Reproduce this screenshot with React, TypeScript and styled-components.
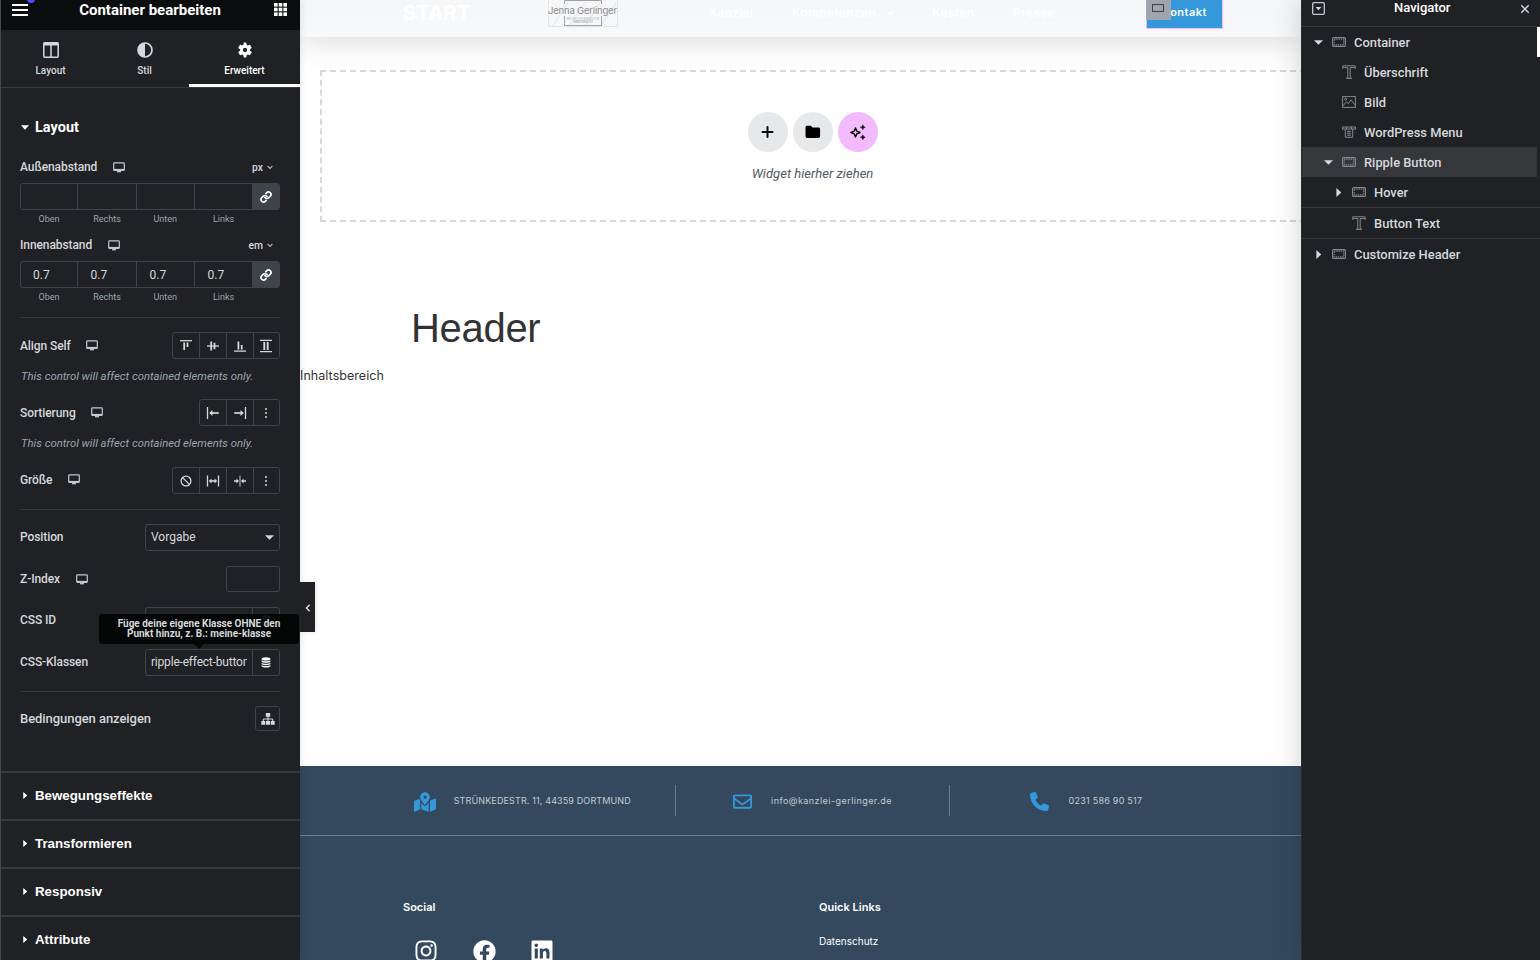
import React from 'react';
import styled, { createGlobalStyle } from 'styled-components';
import { FaInstagram, FaFacebook, FaLinkedin, FaRegEnvelope, FaMapMarkedAlt } from 'react-icons/fa';
import { FaPhone } from 'react-icons/fa6';

const Global = createGlobalStyle`
  * { box-sizing: border-box; }
  html, body { margin: 0; padding: 0; overflow: hidden; background: #fff; }
  body { font-family: Roboto, sans-serif; }
  svg { display: block; flex: none; }
`;

const Shell = styled.div`
  position: relative;
  display: grid;
  grid-template-columns: 300px 1001px 239px;
  width: 1540px;
  height: 960px;
  overflow: hidden;
`;

/* ---------- editor panel ---------- */
const Panel = styled.aside`
  position: relative;
  z-index: 3;
  height: 960px;
  background: #1f2124;
  border-left: 1px solid #45474b;
  color: #d5d8dc;
  box-shadow: 0 0 8px rgba(0, 0, 0, 0.12);
`;
const PanelHeader = styled.header`
  position: relative;
  display: flex;
  align-items: flex-start;
  justify-content: space-between;
  height: 30px;
  padding: 3px 13px 0 11px;
  background: #0c0d0e;
`;
const PanelTitle = styled.h1`
  margin: -3px 0 0 -2px;
  font-size: 15px;
  line-height: 20px;
  font-weight: 700;
  color: #fff;
`;
const Notice = styled.i`
  position: absolute;
  left: 26px;
  top: -5px;
  width: 8px;
  height: 8px;
  border-radius: 50%;
  background: #524cff;
`;
const Tabs = styled.nav`
  display: grid;
  grid-template-columns: 99px 89px 111px;
  height: 58px;
  border-bottom: 1px solid #36383c;
`;
const Tab = styled.div<{ $active?: boolean }>`
  display: flex;
  flex-direction: column;
  align-items: center;
  height: 57px;
  padding-top: 12px;
  gap: 6px;
  font-size: 10px;
  line-height: 13px;
  font-weight: 500;
  color: ${p => (p.$active ? '#fff' : '#d5d8dc')};
  border-bottom: ${p => (p.$active ? '3px solid #fff' : 'none')};
`;
const SectionTitle = styled.div`
  display: flex;
  align-items: center;
  height: 20px;
  margin-top: 29px;
  padding-left: 20px;
  gap: 6px;
  font-size: 14.5px;
  font-weight: 700;
  color: #fff;
`;
const Body = styled.div`
  padding: 0 20px 0 19px;
`;
const Row = styled.div<{ $h: number; $mt?: number }>`
  display: flex;
  align-items: center;
  justify-content: space-between;
  height: ${p => p.$h}px;
  margin-top: ${p => p.$mt || 0}px;
`;
const Label = styled.div<{ $up?: boolean; $large?: boolean }>`
  display: flex;
  align-items: center;
  gap: 15.5px;
  padding-bottom: ${p => (p.$up ? 2 : 0)}px;
  font-size: ${p => (p.$large ? 13 : 12)}px;
  line-height: 16px;
  font-weight: 500;
  letter-spacing: ${p => (p.$large ? -0.06 : -0.09)}px;
  white-space: nowrap;
`;
const Unit = styled.div`
  display: flex;
  align-items: center;
  gap: 3.5px;
  padding-right: 7.5px;
  font-size: 10.3px;
  font-weight: 500;
`;
const SidesBlock = styled.div`
  height: 42px;
  margin-top: 8px;
`;
const Sides = styled.div`
  display: grid;
  grid-template-columns: 57px 59px 58px 58px 26px;
  height: 27px;
  border: 1px solid #3f444b;
  border-radius: 3px;
  overflow: hidden;
  width: 260px;
`;
const Side = styled.div`
  display: flex;
  align-items: center;
  padding-left: 12.5px;
  font-size: 12px;
  letter-spacing: 0.1px;
  border-right: 1px solid #3f444b;
  &:first-child { padding-left: 12px; }
`;
const LinkCell = styled.div`
  display: flex;
  align-items: center;
  padding-left: 7px;
  background: #3f444b;
  color: #fff;
`;
const SideLabels = styled.div`
  display: grid;
  grid-template-columns: 58px 58px 58.5px 58px;
  margin-top: 3px;
  height: 12px;
  font-size: 9px;
  line-height: 12px;
  text-align: center;
  color: #9da5ae;
`;
const Divider = styled.hr<{ $mt: number }>`
  height: 1px;
  margin: ${p => p.$mt}px 0 0;
  border: 0;
  background: #36383c;
`;
const Group = styled.div`
  display: flex;
  height: 27px;
  border: 1px solid #3f444b;
  border-radius: 3px;
`;
const Choice = styled.span`
  display: flex;
  align-items: center;
  justify-content: center;
  width: 27px;
  & + & { border-left: 1px solid #3f444b; }
  &:last-child { width: 26px; padding-right: 1px; }
  &:first-child { width: 26px; }
`;
const Hint = styled.p`
  height: 14px;
  margin: 10px 0 0 1px;
  padding-top: 1px;
  font-size: 11.3px;
  line-height: 14px;
  font-style: italic;
  white-space: nowrap;
  color: #9da5ae;
`;
const Field = styled.div<{ $w: number; $h?: number }>`
  display: flex;
  align-items: center;
  justify-content: space-between;
  width: ${p => p.$w}px;
  height: ${p => p.$h || 27}px;
  border: 1px solid #3f444b;
  border-radius: 3px;
  font-size: 12px;
  color: #d5d8dc;
`;
const FieldText = styled.span<{ $ls?: number }>`
  flex: 1;
  margin: 0 5px;
  padding-bottom: 2px;
  overflow: hidden;
  white-space: nowrap;
  letter-spacing: ${p => p.$ls || 0}px;
`;
const FieldAddon = styled.span`
  display: flex;
  align-items: center;
  justify-content: center;
  width: 27px;
  height: 25px;
  border-left: 1px solid #3f444b;
  color: #fff;
`;
const SelectArrow = styled.span`
  width: 14.5px;
  padding-bottom: 1px;
`;
const IconButton = styled.div`
  display: flex;
  align-items: center;
  justify-content: center;
  width: 25px;
  height: 25px;
  border: 1px solid #3f444b;
  border-radius: 3px;
`;
const Tooltip = styled.div`
  position: absolute;
  left: 98px;
  top: 614px;
  width: 200px;
  height: 30px;
  padding: 5px 0 0;
  border-radius: 3px;
  background: rgba(3, 4, 4, 0.93);
  color: #d5d8dc;
  font-size: 10px;
  line-height: 10px;
  font-weight: 700;
  text-align: center;
  white-space: nowrap;
  &::after {
    content: '';
    position: absolute;
    left: 95px;
    top: 30px;
    border: 5px solid transparent;
    border-top-color: #060707;
    border-bottom: 0;
  }
`;
const Collapse = styled.div`
  position: absolute;
  left: 299px;
  top: 582px;
  display: flex;
  align-items: center;
  justify-content: center;
  width: 15px;
  height: 50px;
  padding-top: 1px;
  background: #1f2124;
  box-shadow: 2px 0 5px rgba(0, 0, 0, 0.08);
`;
const Accordion = styled.div`
  margin-top: 40px;
`;
const AccordionItem = styled.div`
  display: flex;
  align-items: center;
  gap: 8px;
  height: 48px;
  padding: 0 0 2px 21.6px;
  border-top: 2px solid #36383c;
  font-family: 'Liberation Sans', sans-serif;
  font-size: 13.3px;
  font-weight: 700;
  color: #fff;
`;

/* ---------- page preview ---------- */
const Preview = styled.main`
  position: relative;
  display: flex;
  flex-direction: column;
  height: 960px;
  overflow: hidden;
  background: #fff;
  font-family: Inter, sans-serif;
`;
const SiteHeader = styled.header`
  position: relative;
  flex: none;
  height: 37px;
  background: linear-gradient(#f5f6f8, #f8f9fb);
  box-shadow: 0 4px 30px rgba(0, 0, 0, 0.15);
`;
const HeaderRow = styled.div`
  display: flex;
  align-items: flex-start;
  height: 37px;
  padding-left: 103px;
  color: #fff;
`;
const Brand = styled.div`
  width: 145px;
  font-size: 20px;
  line-height: 26px;
  font-weight: 700;
  letter-spacing: 0.25px;
`;
const Logo = styled.div`
  width: 161px;
`;
const NavItem = styled.span<{ $w: number; $ls?: number }>`
  display: flex;
  align-items: center;
  gap: 10px;
  width: ${p => p.$w}px;
  font-size: 12px;
  line-height: 25px;
  font-weight: 500;
  letter-spacing: ${p => p.$ls ?? 0.45}px;
  white-space: nowrap;
`;
const Cta = styled.div`
  position: relative;
  width: 77px;
  height: 29px;
  padding-right: 15px;
  border: 1px solid #f3bafd;
  border-top: 0;
  background: #3498db;
  font-size: 11px;
  line-height: 25px;
  font-weight: 600;
  letter-spacing: 0.5px;
  text-align: right;
`;
const Handle = styled.div`
  position: absolute;
  left: -1px;
  top: 0;
  display: flex;
  justify-content: center;
  width: 25px;
  height: 20px;
  padding: 4px 1px 0 0;
  background: #9da5ae;
`;
const DropZone = styled.section`
  display: flex;
  flex-direction: column;
  align-items: center;
  flex: none;
  width: 986px;
  height: 152px;
  margin: 33px 0 0 20px;
  padding-top: 40px;
  border: 2px dashed #d5d8dc;
  font-family: Roboto, sans-serif;
`;
const Circles = styled.div`
  display: flex;
  gap: 5px;
`;
const Circle = styled.span<{ $ai?: boolean }>`
  display: flex;
  align-items: center;
  justify-content: center;
  width: 40px;
  height: 40px;
  border-radius: 50%;
  background: ${p => (p.$ai ? '#f3bafd' : '#e6e8ea')};
`;
const DropText = styled.p`
  margin: 13px 0 0 -1px;
  font-size: 13px;
  line-height: 17px;
  font-style: italic;
  letter-spacing: 0.03px;
  color: #515962;
`;
const Headline = styled.h2`
  margin: 81px 0 0 111px;
  font-family: 'Liberation Sans', sans-serif;
  font-size: 40px;
  line-height: 50px;
  font-weight: 400;
  letter-spacing: -0.3px;
  color: #333;
`;
const Copy = styled.p`
  margin: 14px 0 0;
  font-size: 12.5px;
  line-height: 18px;
  letter-spacing: 0.05px;
  color: #333;
`;
const Footer = styled.footer`
  height: 194px;
  margin-top: auto;
  background: #34495e;
  color: #fff;
`;
const ContactBar = styled.div`
  display: grid;
  grid-template-columns: 376px 274px 351px;
  height: 70px;
  padding-top: 19px;
  border-bottom: 1px solid #6b7d8b;
`;
const Contact = styled.div<{ $pl: number; $gap: number; $line?: boolean; $ls: number }>`
  display: flex;
  align-items: center;
  gap: ${p => p.$gap}px;
  height: 31px;
  padding-left: ${p => p.$pl}px;
  border-right: ${p => (p.$line ? '1px solid #6b7d8b' : 'none')};
  font-size: 9px;
  letter-spacing: ${p => p.$ls}px;
  color: #c3cad1;
  white-space: nowrap;
  svg { margin-top: 2px; color: #3498db; }
`;
const FooterColumns = styled.div`
  display: grid;
  grid-template-columns: 416px auto;
  padding: 63px 0 0 103px;
`;
const FooterTitle = styled.h3`
  margin: 0;
  font-size: 11px;
  line-height: 16px;
  font-weight: 600;
`;
const Socials = styled.div`
  display: flex;
  align-items: center;
  height: 24px;
  gap: 34.5px;
  margin: 24px 0 0 11px;
`;
const FooterLink = styled.div`
  margin-top: 19px;
  font-size: 10px;
  line-height: 14px;
`;

/* ---------- navigator ---------- */
const Navigator = styled.aside`
  position: relative;
  z-index: 2;
  height: 960px;
  background: #1f2124;
  border-left: 1px solid #2a2c30;
  color: #d5d8dc;
  box-shadow: 0 0 30px rgba(0, 0, 0, 0.18);
`;
const NavHead = styled.header`
  display: flex;
  justify-content: space-between;
  height: 27px;
  padding: 2px 10.5px 0 10px;
  border-bottom: 1px solid #36383c;
  font-size: 13px;
  line-height: 11px;
  font-weight: 500;
  color: #fff;
`;
const TreeRow = styled.div<{ $level: number; $active?: boolean; $line?: boolean }>`
  display: flex;
  align-items: center;
  height: ${p => (p.$line ? 31 : 30)}px;
  margin-right: ${p => (p.$active ? 3 : 0)}px;
  padding-left: ${p => 12 + p.$level * 10}px;
  background: ${p => (p.$active ? '#35373b' : 'transparent')};
  border-bottom: ${p => (p.$line ? '1px solid #36383c' : 'none')};
  font-size: 12.88px;
  font-weight: 500;
  white-space: nowrap;
`;
const Arrow = styled.span`
  display: flex;
  justify-content: center;
  width: 18px;
  padding-right: 9px;
`;
const TreeIcon = styled.span`
  width: 22px;
  color: #85888c;
`;
const Scroll = styled.i`
  position: absolute;
  right: 0;
  top: 27px;
  width: 3px;
  height: 30px;
  background: #fff;
`;

/* ---------- icons ---------- */
const Desktop = () => (
  <svg width="12" height="11" viewBox="0 0 12 11" fill="none" stroke="#c4c8cd" strokeWidth="1.2">
    <rect x="0.7" y="0.9" width="10.6" height="7.4" rx="0.8" />
    <path d="M0.7 7.7h10.6" strokeWidth="1.6" />
    <path d="M4 9.7h4" strokeWidth="1.3" />
  </svg>
);
const CaretDown = ({ w = 8, h = 5 }: { w?: number; h?: number }) => (
  <svg width={w} height={h} viewBox="0 0 8 5" preserveAspectRatio="none"><path d="M0 .2h8L4 4.800z" fill="currentColor" /></svg>
);
const CaretRight = ({ h = 8 }: { h?: number }) => (
  <svg width={h * 0.63} height={h} viewBox="0 0 5 8"><path d="M.3 0v8L4.800 4z" fill="currentColor" /></svg>
);
const SmallChevron = () => (
  <svg width="6" height="5" viewBox="0 0 6 5" fill="none" stroke="#b4b9bf" strokeWidth="1.1"><path d="M.6 1l2.4 2.4L5.4 1" /></svg>
);
const Chain = () => (
  <svg width="12" height="12" viewBox="0 0 24 24" fill="none" stroke="currentColor" strokeWidth="3.4" strokeLinecap="round" strokeLinejoin="round">
    <path d="M10 13a5 5 0 0 0 7.54.54l3-3a5 5 0 0 0-7.07-7.07l-1.72 1.71" />
    <path d="M14 11a5 5 0 0 0-7.54-.54l-3 3a5 5 0 0 0 7.07 7.07l1.71-1.71" />
  </svg>
);
const Stack = () => (
  <svg width="10" height="11" viewBox="0 0 10 11" fill="currentColor">
    <ellipse cx="5" cy="1.9" rx="4.4" ry="1.7" />
    <path d="M.6 3.2c1 1.3 7.8 1.3 8.8 0v1.5c-1 1.5-7.8 1.5-8.8 0zM.6 5.7c1 1.3 7.8 1.3 8.8 0V7c-1 1.5-7.8 1.5-8.8 0zM.6 8c1 1.3 7.8 1.3 8.8 0v1.3c-1 1.7-7.8 1.7-8.8 0z" />
  </svg>
);
const paths: Record<string, React.ReactNode> = {
  top: <><path d="M1 1.7h12" /><path d="M5.2 3.5V11" strokeWidth="1.8" /><path d="M8.500 3.500V8" strokeWidth="1.8" /></>,
  middle: <><path d="M1 7h12" /><path d="M5.2 2.500v9" strokeWidth="1.8" /><path d="M8.500 3.800v6.400" strokeWidth="1.8" /></>,
  bottom: <><path d="M1 12.1h12" /><path d="M5.4 2.500v8" strokeWidth="1.8" /><path d="M8.700 6v4.500" strokeWidth="1.8" /></>,
  stretch: <><path d="M1 1.3h12M1 12.700h12" /><path d="M5.3 3v8M8.700 3v8" strokeWidth="1.9" /></>,
  start: <><path d="M1.5 1v12" /><path d="M12.8 7H4.500" strokeWidth="1.7" /><path d="M3.2 7l3.300-2.900v5.800z" fill="currentColor" stroke="none" /></>,
  end: <><path d="M12.5 1v12" /><path d="M1.2 7h8.300" strokeWidth="1.7" /><path d="M10.8 7L7.500 4.100v5.800z" fill="currentColor" stroke="none" /></>,
  dots: <g fill="currentColor" stroke="none"><circle cx="7" cy="3" r="1" /><circle cx="7" cy="7" r="1" /><circle cx="7" cy="11" r="1" /></g>,
  none: <><circle cx="7" cy="7" r="4.9" /><path d="M3.6 3.600l6.800 6.800" /></>,
  grow: <><path d="M1.5 1.500v11M12.500 1.500v11" /><path d="M4 7h6" strokeWidth="1.6" /><path d="M2.8 7l2.700-2.600v5.200zM11.200 7L8.500 4.400v5.200z" fill="currentColor" stroke="none" /></>,
  shrink: <><path d="M7 1.500v11" opacity=".7" /><path d="M1 7h3M13 7h-3" strokeWidth="1.6" /><path d="M6 7L3.400 4.600v4.800zM8 7l2.600-2.400v4.800z" fill="currentColor" stroke="none" /></>,
};
const Glyph = ({ name }: { name: string }) => (
  <svg width="14" height="14" viewBox="0 0 14 14" fill="none" stroke="currentColor" strokeWidth="1.3">{paths[name]}</svg>
);
const tree: Record<string, React.ReactNode> = {
  box: <><rect x=".6" y="2.600" width="12.800" height="8.800" rx="1" strokeWidth="1.1" /><rect x="2.200" y="4.200" width="9.600" height="5.600" strokeDasharray="1.3 .9" strokeWidth="1.2" /></>,
  text: <path d="M.8 3.800V.8h12.400v3M.8 2.600h5v10.300H4.500v.5h5v-.5H8.200V2.600h5" />,
  image: <><rect x=".6" y="1.600" width="12.800" height="10.800" /><path d="M.8 11l3.600-4.200 1.900 1.900L9 4.800l4.300 5.600" /><circle cx="3.600" cy="4.200" r="1" /></>,
  menu: <><path d="M.5 4.500V2h13v2.500M.7 4h12.600M4.500 2v2M9.500 2v2M3.300 4v8.300h7.400V4M5 6.300h4M5 8.200h4M5 10.200h4" /></>,
};
const TreeGlyph = ({ name }: { name: string }) => (
  <svg width="14" height="14" viewBox="0 0 14 14" fill="none" stroke="currentColor" strokeWidth="1">{tree[name]}</svg>
);

const Dimensions = ({ values }: { values: string[] }) => (
  <SidesBlock>
    <Sides>
      {values.map((v, i) => <Side key={i}>{v}</Side>)}
      <LinkCell><Chain /></LinkCell>
    </Sides>
    <SideLabels><span>Oben</span><span>Rechts</span><span>Unten</span><span>Links</span></SideLabels>
  </SidesBlock>
);
const Choices = ({ names }: { names: string[] }) => (
  <Group>{names.map(n => <Choice key={n}><Glyph name={n} /></Choice>)}</Group>
);

const nodes = [
  { name: 'Container', icon: 'box', level: 0, open: true },
  { name: 'Überschrift', icon: 'text', level: 1 },
  { name: 'Bild', icon: 'image', level: 1 },
  { name: 'WordPress Menu', icon: 'menu', level: 1 },
  { name: 'Ripple Button', icon: 'box', level: 1, open: true, active: true },
  { name: 'Hover', icon: 'box', level: 2, open: false, line: true },
  { name: 'Button Text', icon: 'text', level: 2, line: true },
  { name: 'Customize Header', icon: 'box', level: 0, open: false },
];

export default function App() {
  return (
    <Shell>
      <Global />
      <Panel>
        <PanelHeader>
          <svg width="16" height="14" viewBox="0 0 16 14" stroke="#fff" strokeWidth="2"><path d="M0 2h16M0 7h16M0 12h16" /></svg>
          <PanelTitle>Container bearbeiten</PanelTitle>
          <svg width="13" height="13" viewBox="0 0 13 13" fill="#fff">
            {[0, 4.7, 9.4].map(x => [0, 4.7, 9.4].map(y => <rect key={`${x}-${y}`} x={x} y={y} width="3.6" height="3.6" />))}
          </svg>
          <Notice />
        </PanelHeader>
        <Tabs>
          <Tab>
            <svg width="16" height="16" viewBox="0 0 16 16" fill="none" stroke="currentColor" strokeWidth="1.5"><rect x=".8" y=".8" width="14.400" height="14.400" rx="1" /><path d="M.8 2h14.400" strokeWidth="3" /><path d="M8 1v14" /></svg>
            Layout
          </Tab>
          <Tab>
            <svg width="16" height="16" viewBox="0 0 16 16"><circle cx="8" cy="8" r="7" fill="none" stroke="currentColor" strokeWidth="1.7" /><path d="M8 1a7 7 0 0 0 0 14z" fill="currentColor" /></svg>
            Stil
          </Tab>
          <Tab $active>
            <svg width="16" height="16" viewBox="0 0 24 24"><path fillRule="evenodd" fill="currentColor" d="M19.430 12.980c.04-.32.07-.64.07-.98s-.03-.66-.07-.98l2.300-1.800c.3-.24.38-.66.18-1l-2.200-3.800c-.2-.35-.6-.5-.97-.35l-2.700 1.100a8 8 0 0 0-1.600-.95l-.42-2.800A.85.85 0 0 0 13.200.7h-2.400c-.42 0-.77.3-.83.72l-.42 2.800a8 8 0 0 0-1.600.95l-2.700-1.100c-.37-.14-.78 0-.97.35l-2.200 3.800c-.2.34-.12.76.18 1l2.300 1.800a8 8 0 0 0 0 1.960l-2.300 1.800c-.3.24-.38.66-.18 1l2.200 3.800c.2.35.6.5.97.35l2.700-1.100c.5.38 1.030.7 1.600.95l.42 2.800c.06.42.41.72.83.72h2.400c.42 0 .77-.3.83-.72l.42-2.800a8 8 0 0 0 1.600-.95l2.700 1.100c.37.14.78 0 .97-.35l2.200-3.800c.2-.34.12-.76-.18-1zM12 15.200a3.200 3.200 0 1 1 0-6.400 3.200 3.200 0 0 1 0 6.400z" /></svg>
            Erweitert
          </Tab>
        </Tabs>
        <SectionTitle><CaretDown />Layout</SectionTitle>
        <Body>
          <Row $h={16} $mt={22}><Label>Außenabstand<Desktop /></Label><Unit>px<SmallChevron /></Unit></Row>
          <Dimensions values={['', '', '', '']} />
          <Row $h={16} $mt={12}><Label>Innenabstand<Desktop /></Label><Unit>em<SmallChevron /></Unit></Row>
          <Dimensions values={['0.7', '0.7', '0.7', '0.7']} />
          <Divider $mt={14} />
          <Row $h={27} $mt={14}><Label>Align Self<Desktop /></Label><Choices names={['top', 'middle', 'bottom', 'stretch']} /></Row>
          <Hint>This control will affect contained elements only.</Hint>
          <Row $h={27} $mt={16}><Label>Sortierung<Desktop /></Label><Choices names={['start', 'end', 'dots']} /></Row>
          <Hint>This control will affect contained elements only.</Hint>
          <Row $h={27} $mt={17}><Label $up>Größe<Desktop /></Label><Choices names={['none', 'grow', 'shrink', 'dots']} /></Row>
          <Divider $mt={15} />
          <Row $h={27} $mt={14}><Label $up>Position</Label><Field $w={135}><FieldText>Vorgabe</FieldText><SelectArrow><CaretDown w={9} h={5} /></SelectArrow></Field></Row>
          <Row $h={26} $mt={15}><Label>Z-Index<Desktop /></Label><Field $w={54} $h={26} /></Row>
          <Row $h={27} $mt={15}><Label $up>CSS ID</Label><Field $w={135}><FieldText /><FieldAddon><Stack /></FieldAddon></Field></Row>
          <Row $h={27} $mt={15}><Label $up>CSS-Klassen</Label><Field $w={135}><FieldText $ls={-0.2}>ripple-effect-button</FieldText><FieldAddon><Stack /></FieldAddon></Field></Row>
          <Divider $mt={15} />
          <Row $h={25} $mt={14}><Label $large>Bedingungen anzeigen</Label>
            <IconButton><svg width="14" height="12" viewBox="0 0 14 12" fill="currentColor"><path d="M4.800 0h4.400v3.800H4.800zM.3 8h4v3.800h-4zM5 8h4v3.800H5zM9.700 8h4v3.800h-4z" /><path d="M7 3v5M2.300 8V6h9.400v2" fill="none" stroke="currentColor" /></svg></IconButton>
          </Row>
        </Body>
        <Accordion>
          {['Bewegungseffekte', 'Transformieren', 'Responsiv', 'Attribute'].map(t => <AccordionItem key={t}><CaretRight h={7} />{t}</AccordionItem>)}
        </Accordion>
        <Tooltip>Füge deine eigene Klasse OHNE den<br />Punkt hinzu, z. B.: meine-klasse</Tooltip>
        <Collapse><svg width="6" height="8" viewBox="0 0 6 8" fill="none" stroke="#e0e2e5" strokeWidth="1.3"><path d="M4.600.8L1.400 4l3.200 3.200" /></svg></Collapse>
      </Panel>

      <Preview>
        <SiteHeader>
          <HeaderRow>
            <Brand>START</Brand>
            <Logo>
              <svg width="70" height="27" viewBox="0 0 70 27" fill="none">
                <path d="M.5 0v26.500h69V0M4 27L20 3M20 27L37 2M36 27L53 2M52 27L69 2" stroke="#e3e4e6" />
                <path d="M16.500 4V.5h37V4M16.500 16v9.500h37V16" stroke="#a3a3a3" />
                <text x="0" y="13.500" fontSize="9.5" fontFamily="Inter" fill="#8a8a8a" textLength="69">Jenna Gerlinger</text>
                <text x="19" y="19.500" fontSize="2.8" fontFamily="Inter" fill="#a3a3a3" textLength="32">RECHTSANWÄLTIN</text>
                <text x="25" y="23.200" fontSize="2.8" fontFamily="Inter" fill="#8a8a8a" textLength="20">ARBEITSRECHT</text>
              </svg>
            </Logo>
            <NavItem $w={83} $ls={0.3}>Kanzlei</NavItem>
            <NavItem $w={140}>Kompetenzen<svg width="8" height="6" viewBox="0 0 8 6" fill="none" stroke="#fff" strokeWidth="1.3"><path d="M.8 1L4 4.400 7.200 1" /></svg></NavItem>
            <NavItem $w={81}>Kosten</NavItem>
            <NavItem $w={133}>Presse</NavItem>
            <Cta>Kontakt<Handle><svg width="12" height="8" viewBox="0 0 12 8" fill="none" stroke="#3f444b" strokeWidth="1.1"><rect x=".5" y=".5" width="11" height="7" /></svg></Handle></Cta>
          </HeaderRow>
        </SiteHeader>
        <DropZone>
          <Circles>
            <Circle><svg width="14" height="14" viewBox="0 0 14 14" stroke="#0c0d0e" strokeWidth="2" strokeLinecap="round"><path d="M6.500 2v10M1.500 7h10" /></svg></Circle>
            <Circle><svg width="16" height="14" viewBox="0 0 16 14"><path d="M2.200.7h3.600l1.700 1.700h5.900c1.100 0 1.700.7 1.700 1.700v7c0 1.300-.7 2-2 2H2.500c-1.300 0-2-.7-2-2V2.400C.5 1.300 1.100.7 2.200.7z" fill="#000" /></svg></Circle>
            <Circle $ai><svg width="16" height="16" viewBox="0 0 16 16"><path d="M5.500 4l1.300 3.200L10 8.500 6.800 9.800 5.500 13 4.200 9.800 1 8.500l3.200-1.300z" fill="none" stroke="#000" strokeWidth="1.4" strokeLinejoin="round" /><path d="M12.800.8l.8 1.700 1.700.8-1.700.8-.8 1.700-.8-1.700-1.700-.8 1.700-.8zM12.800 10.700l.8 1.700 1.700.8-1.700.8-.8 1.700-.8-1.700-1.700-.8 1.700-.8z" fill="#000" stroke="#000" strokeWidth=".4" /></svg></Circle>
          </Circles>
          <DropText>Widget hierher ziehen</DropText>
        </DropZone>
        <Headline>Header</Headline>
        <Copy>Inhaltsbereich</Copy>
        <Footer>
          <ContactBar>
            <Contact $pl={114} $gap={17.7} $line $ls={0.13}><FaMapMarkedAlt size={22} />STRÜNKEDESTR. 11, 44359 DORTMUND</Contact>
            <Contact $pl={57} $gap={19} $line $ls={0.45}><FaRegEnvelope size={19} />info@kanzlei-gerlinger.de</Contact>
            <Contact $pl={80} $gap={19.5} $ls={0.25}><FaPhone size={19} />0231 586 90 517</Contact>
          </ContactBar>
          <FooterColumns>
            <div>
              <FooterTitle>Social</FooterTitle>
              <Socials><FaInstagram size={24} /><FaFacebook size={23} /><FaLinkedin size={24} /></Socials>
            </div>
            <div>
              <FooterTitle>Quick Links</FooterTitle>
              <FooterLink>Datenschutz</FooterLink>
            </div>
          </FooterColumns>
        </Footer>
      </Preview>

      <Navigator>
        <NavHead>
          <svg width="13" height="13" viewBox="0 0 13 13" fill="none" stroke="#c4c8cd" strokeWidth="1.3"><rect x=".7" y=".7" width="11.600" height="11.600" rx="1" /><path d="M3.500 5h6l-3 3.300z" fill="#d5d8dc" stroke="none" /></svg>
          Navigator
          <svg width="10" height="14" viewBox="0 0 10 14" stroke="#d5d8dc" strokeWidth="1.4"><path d="M1.300 3.300l7.400 7.400M8.700 3.300l-7.400 7.400" /></svg>
        </NavHead>
        {nodes.map(n => (
          <TreeRow key={n.name} $level={n.level} $active={n.active} $line={n.line}>
            <Arrow>{n.open === true ? <CaretDown w={9} h={5} /> : n.open === false ? <CaretRight h={9} /> : null}</Arrow>
            <TreeIcon><TreeGlyph name={n.icon} /></TreeIcon>
            {n.name}
          </TreeRow>
        ))}
        <Scroll />
      </Navigator>
    </Shell>
  );
}
